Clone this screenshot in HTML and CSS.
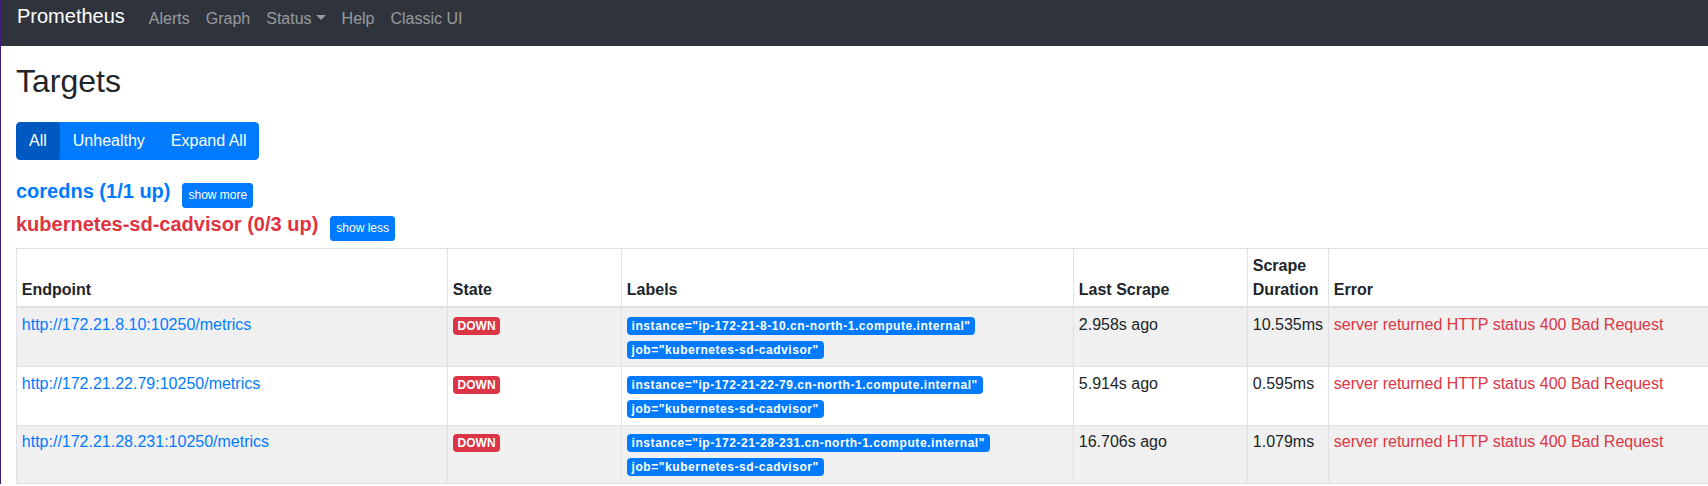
FILE: index.html
```html
<!DOCTYPE html>
<html lang="en">
<head>
<meta charset="utf-8">
<title>Prometheus Time Series Collection and Processing Server</title>
<link rel="stylesheet" href="styles.css">
</head>
<body>
<nav class="navbar">
  <a class="brand" href="#">Prometheus</a>
  <ul class="nav">
    <li><a class="nav-link" href="#">Alerts</a></li>
    <li><a class="nav-link" href="#">Graph</a></li>
    <li><a class="nav-link dropdown-toggle" href="#">Status</a></li>
    <li><a class="nav-link" href="#">Help</a></li>
    <li><a class="nav-link" href="#">Classic UI</a></li>
  </ul>
</nav>
<main class="container">
  <h2 class="page-title">Targets</h2>
  <div class="btn-group">
    <button class="btn btn-primary active">All</button>
    <button class="btn btn-primary">Unhealthy</button>
    <button class="btn btn-primary">Expand All</button>
  </div>
  <div class="pools">
    <h3 class="pool-title"><a class="pool-link up" href="#">coredns (1/1 up)</a><button class="btn-toggle">show more</button></h3>
    <h3 class="pool-title"><a class="pool-link down" href="#">kubernetes-sd-cadvisor (0/3 up)</a><button class="btn-toggle">show less</button></h3>
  </div>
  <table class="targets">
    <colgroup>
      <col class="c-endpoint">
      <col class="c-state">
      <col class="c-labels">
      <col class="c-last">
      <col class="c-duration">
      <col class="c-error">
    </colgroup>
    <thead>
      <tr>
        <th>Endpoint</th>
        <th>State</th>
        <th>Labels</th>
        <th>Last Scrape</th>
        <th>Scrape Duration</th>
        <th>Error</th>
      </tr>
    </thead>
    <tbody>
      <tr>
        <td><a class="endpoint" href="#">http://172.21.8.10:10250/metrics</a></td>
        <td><span class="badge badge-danger">DOWN</span></td>
        <td><span class="badge badge-primary label">instance="ip-172-21-8-10.cn-north-1.compute.internal"</span> <span class="badge badge-primary label">job="kubernetes-sd-cadvisor"</span></td>
        <td>2.958s ago</td>
        <td>10.535ms</td>
        <td class="error">server returned HTTP status 400 Bad Request</td>
      </tr>
      <tr>
        <td><a class="endpoint" href="#">http://172.21.22.79:10250/metrics</a></td>
        <td><span class="badge badge-danger">DOWN</span></td>
        <td><span class="badge badge-primary label">instance="ip-172-21-22-79.cn-north-1.compute.internal"</span> <span class="badge badge-primary label">job="kubernetes-sd-cadvisor"</span></td>
        <td>5.914s ago</td>
        <td>0.595ms</td>
        <td class="error">server returned HTTP status 400 Bad Request</td>
      </tr>
      <tr>
        <td><a class="endpoint" href="#">http://172.21.28.231:10250/metrics</a></td>
        <td><span class="badge badge-danger">DOWN</span></td>
        <td><span class="badge badge-primary label">instance="ip-172-21-28-231.cn-north-1.compute.internal"</span> <span class="badge badge-primary label">job="kubernetes-sd-cadvisor"</span></td>
        <td>16.706s ago</td>
        <td>1.079ms</td>
        <td class="error">server returned HTTP status 400 Bad Request</td>
      </tr>
    </tbody>
  </table>
</main>
</body>
</html>
```
FILE: styles.css
```css
html, body {
  overflow: hidden;
}

body {
  margin: 0;
  border-left: 1px solid #3b1d73;
  font-family: "Liberation Sans", Arial, sans-serif;
  font-size: 16px;
  line-height: 1.5;
  color: #212529;
  background: #fff;
}

a {
  text-decoration: none;
}

/* navbar */
.navbar {
  display: flex;
  align-items: flex-start;
  height: 46px;
  padding: 0 16px;
  background: #2f343c;
}

.brand {
  font-size: 20px;
  line-height: 24px;
  padding-top: 4px;
  margin-right: 16px;
  color: #fff;
}

.nav {
  display: flex;
  list-style: none;
  margin: 0;
  padding: 0;
}

.nav-link {
  display: block;
  padding: 7px 8px 0;
  line-height: 24px;
  color: rgba(255, 255, 255, 0.5);
}

.dropdown-toggle::after {
  content: "";
  display: inline-block;
  margin-left: 4px;
  vertical-align: 4px;
  border-top: 5px solid;
  border-right: 5px solid transparent;
  border-left: 5px solid transparent;
}

/* content */
.container {
  padding: 0 15px;
}

.page-title {
  margin: 16px 0 21.5px;
  font-size: 32px;
  font-weight: 400;
  line-height: 1.2;
}

.btn-group {
  display: inline-flex;
  vertical-align: top;
}

.btn {
  font-family: inherit;
  font-size: 16px;
  line-height: 24px;
  padding: 6px 12px;
  border: 1px solid #007bff;
  background: #007bff;
  color: #fff;
  margin: 0;
  cursor: pointer;
}

.btn:first-child {
  border-radius: 4px 0 0 4px;
}

.btn:last-child {
  border-radius: 0 4px 4px 0;
}

.btn.active {
  background: #0059c1;
  border-color: #0059c1;
}

.pools {
  margin-top: 15px;
}

.pool-title {
  margin: 0;
  font-size: 20px;
  font-weight: 700;
  line-height: 32px;
}

.pool-link.up {
  color: #007bff;
}

.pool-link.down {
  color: #e0323f;
}

.btn-toggle {
  font-family: inherit;
  font-size: 12px;
  font-weight: 400;
  line-height: 17px;
  padding: 3px 5px;
  margin-left: 12px;
  border: 1px solid #007bff;
  border-radius: 3px;
  background: #007bff;
  color: #fff;
  vertical-align: -1px;
}

/* table */
.targets {
  margin-top: 7px;
  border-collapse: collapse;
  table-layout: fixed;
  width: 1812px;
}

.c-endpoint { width: 431px; }
.c-state { width: 174px; }
.c-labels { width: 452px; }
.c-last { width: 174px; }
.c-duration { width: 81px; }
.c-error { width: 500px; }

.targets th,
.targets td {
  padding: 4.8px;
  border: 1px solid #dee2e6;
  text-align: left;
  vertical-align: top;
}

.targets th {
  vertical-align: bottom;
  border-bottom: 2px solid #dee2e6;
  font-weight: 700;
}

.targets tbody tr:nth-child(odd) {
  background: #f0f0f0;
}

.endpoint {
  color: #007bff;
}

.error {
  color: #dc3545;
}

.badge {
  display: inline-block;
  padding: 3px 4.8px;
  font-size: 12px;
  font-weight: 700;
  line-height: 1;
  border-radius: 4px;
  color: #fff;
  white-space: nowrap;
  vertical-align: baseline;
}

.badge-danger {
  background: #dc3545;
}

.badge-primary {
  background: #007bff;
}

.label {
  margin-right: 4px;
  letter-spacing: 0.55px;
}
```
